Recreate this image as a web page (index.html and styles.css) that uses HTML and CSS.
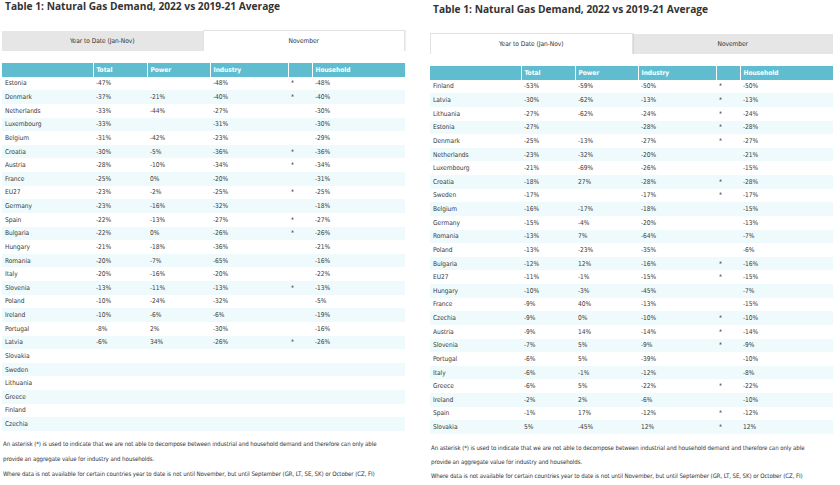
FILE: index.html
```html
<!DOCTYPE html>
<html>
<head>
<meta charset="utf-8">
<link rel="stylesheet" href="styles.css">
</head>
<body>
<div class="page">
  <section class="panel panel-left">
    <h1 class="title">Table 1: Natural Gas Demand, 2022 vs 2019-21 Average</h1>
    <div class="tabs">
      <div class="tab">Year to Date (Jan-Nov)</div>
      <div class="tab active">November</div>
    </div>
    <table class="data">
      <colgroup><col class="c1"><col class="c2"><col class="c3"><col class="c4"><col class="c5"><col class="c6"></colgroup>
      <thead><tr><th></th><th>Total</th><th>Power</th><th>Industry</th><th></th><th>Household</th></tr></thead>
      <tbody>
        <tr><td>Estonia</td><td>-47%</td><td></td><td>-48%</td><td>*</td><td>-48%</td></tr>
        <tr><td>Denmark</td><td>-37%</td><td>-21%</td><td>-40%</td><td>*</td><td>-40%</td></tr>
        <tr><td>Netherlands</td><td>-33%</td><td>-44%</td><td>-27%</td><td></td><td>-30%</td></tr>
        <tr><td>Luxembourg</td><td>-33%</td><td></td><td>-31%</td><td></td><td>-30%</td></tr>
        <tr><td>Belgium</td><td>-31%</td><td>-42%</td><td>-23%</td><td></td><td>-29%</td></tr>
        <tr><td>Croatia</td><td>-30%</td><td>-5%</td><td>-36%</td><td>*</td><td>-36%</td></tr>
        <tr><td>Austria</td><td>-28%</td><td>-10%</td><td>-34%</td><td>*</td><td>-34%</td></tr>
        <tr><td>France</td><td>-25%</td><td>0%</td><td>-20%</td><td></td><td>-31%</td></tr>
        <tr><td>EU27</td><td>-23%</td><td>-2%</td><td>-25%</td><td>*</td><td>-25%</td></tr>
        <tr><td>Germany</td><td>-23%</td><td>-16%</td><td>-32%</td><td></td><td>-18%</td></tr>
        <tr><td>Spain</td><td>-22%</td><td>-13%</td><td>-27%</td><td>*</td><td>-27%</td></tr>
        <tr><td>Bulgaria</td><td>-22%</td><td>0%</td><td>-26%</td><td>*</td><td>-26%</td></tr>
        <tr><td>Hungary</td><td>-21%</td><td>-18%</td><td>-36%</td><td></td><td>-21%</td></tr>
        <tr><td>Romania</td><td>-20%</td><td>-7%</td><td>-65%</td><td></td><td>-16%</td></tr>
        <tr><td>Italy</td><td>-20%</td><td>-16%</td><td>-20%</td><td></td><td>-22%</td></tr>
        <tr><td>Slovenia</td><td>-13%</td><td>-11%</td><td>-13%</td><td>*</td><td>-13%</td></tr>
        <tr><td>Poland</td><td>-10%</td><td>-24%</td><td>-32%</td><td></td><td>-5%</td></tr>
        <tr><td>Ireland</td><td>-10%</td><td>-6%</td><td>-6%</td><td></td><td>-19%</td></tr>
        <tr><td>Portugal</td><td>-8%</td><td>2%</td><td>-30%</td><td></td><td>-16%</td></tr>
        <tr><td>Latvia</td><td>-6%</td><td>34%</td><td>-26%</td><td>*</td><td>-26%</td></tr>
        <tr><td>Slovakia</td><td></td><td></td><td></td><td></td><td></td></tr>
        <tr><td>Sweden</td><td></td><td></td><td></td><td></td><td></td></tr>
        <tr><td>Lithuania</td><td></td><td></td><td></td><td></td><td></td></tr>
        <tr><td>Greece</td><td></td><td></td><td></td><td></td><td></td></tr>
        <tr><td>Finland</td><td></td><td></td><td></td><td></td><td></td></tr>
        <tr><td>Czechia</td><td></td><td></td><td></td><td></td><td></td></tr>
      </tbody>
    </table>
    <div class="notes">
      <p>An asterisk (*) is used to indicate that we are not able to decompose between industrial and household demand and therefore can only able provide an aggregate value for industry and households.</p>
      <p>Where data is not available for certain countries year to date is not until November, but until September (GR, LT, SE, SK) or October (CZ, FI)</p>
    </div>
  </section>

  <section class="panel panel-right">
    <h1 class="title">Table 1: Natural Gas Demand, 2022 vs 2019-21 Average</h1>
    <div class="tabs">
      <div class="tab active">Year to Date (Jan-Nov)</div>
      <div class="tab">November</div>
    </div>
    <table class="data">
      <colgroup><col class="c1"><col class="c2"><col class="c3"><col class="c4"><col class="c5"><col class="c6"></colgroup>
      <thead><tr><th></th><th>Total</th><th>Power</th><th>Industry</th><th></th><th>Household</th></tr></thead>
      <tbody>
        <tr><td>Finland</td><td>-53%</td><td>-59%</td><td>-50%</td><td>*</td><td>-50%</td></tr>
        <tr><td>Latvia</td><td>-30%</td><td>-62%</td><td>-13%</td><td>*</td><td>-13%</td></tr>
        <tr><td>Lithuania</td><td>-27%</td><td>-62%</td><td>-24%</td><td>*</td><td>-24%</td></tr>
        <tr><td>Estonia</td><td>-27%</td><td></td><td>-28%</td><td>*</td><td>-28%</td></tr>
        <tr><td>Denmark</td><td>-25%</td><td>-13%</td><td>-27%</td><td>*</td><td>-27%</td></tr>
        <tr><td>Netherlands</td><td>-23%</td><td>-32%</td><td>-20%</td><td></td><td>-21%</td></tr>
        <tr><td>Luxembourg</td><td>-21%</td><td>-69%</td><td>-26%</td><td></td><td>-15%</td></tr>
        <tr><td>Croatia</td><td>-18%</td><td>27%</td><td>-28%</td><td>*</td><td>-28%</td></tr>
        <tr><td>Sweden</td><td>-17%</td><td></td><td>-17%</td><td>*</td><td>-17%</td></tr>
        <tr><td>Belgium</td><td>-16%</td><td>-17%</td><td>-18%</td><td></td><td>-15%</td></tr>
        <tr><td>Germany</td><td>-15%</td><td>-4%</td><td>-20%</td><td></td><td>-13%</td></tr>
        <tr><td>Romania</td><td>-13%</td><td>7%</td><td>-64%</td><td></td><td>-7%</td></tr>
        <tr><td>Poland</td><td>-13%</td><td>-23%</td><td>-35%</td><td></td><td>-6%</td></tr>
        <tr><td>Bulgaria</td><td>-12%</td><td>12%</td><td>-16%</td><td>*</td><td>-16%</td></tr>
        <tr><td>EU27</td><td>-11%</td><td>-1%</td><td>-15%</td><td>*</td><td>-15%</td></tr>
        <tr><td>Hungary</td><td>-10%</td><td>-3%</td><td>-45%</td><td></td><td>-7%</td></tr>
        <tr><td>France</td><td>-9%</td><td>40%</td><td>-13%</td><td></td><td>-15%</td></tr>
        <tr><td>Czechia</td><td>-9%</td><td>0%</td><td>-10%</td><td>*</td><td>-10%</td></tr>
        <tr><td>Austria</td><td>-9%</td><td>14%</td><td>-14%</td><td>*</td><td>-14%</td></tr>
        <tr><td>Slovenia</td><td>-7%</td><td>5%</td><td>-9%</td><td>*</td><td>-9%</td></tr>
        <tr><td>Portugal</td><td>-6%</td><td>5%</td><td>-39%</td><td></td><td>-10%</td></tr>
        <tr><td>Italy</td><td>-6%</td><td>-1%</td><td>-12%</td><td></td><td>-8%</td></tr>
        <tr><td>Greece</td><td>-6%</td><td>5%</td><td>-22%</td><td>*</td><td>-22%</td></tr>
        <tr><td>Ireland</td><td>-2%</td><td>2%</td><td>-6%</td><td></td><td>-10%</td></tr>
        <tr><td>Spain</td><td>-1%</td><td>17%</td><td>-12%</td><td>*</td><td>-12%</td></tr>
        <tr><td>Slovakia</td><td>5%</td><td>-45%</td><td>12%</td><td>*</td><td>12%</td></tr>
      </tbody>
    </table>
    <div class="notes">
      <p>An asterisk (*) is used to indicate that we are not able to decompose between industrial and household demand and therefore can only able provide an aggregate value for industry and households.</p>
      <p>Where data is not available for certain countries year to date is not until November, but until September (GR, LT, SE, SK) or October (CZ, FI)</p>
    </div>
  </section>
</div>
</body>
</html>
```

FILE: styles.css
```css
html, body {
  margin: 0;
  padding: 0;
  background: #ffffff;
}

.page {
  display: flex;
  align-items: flex-start;
  width: 840px;
  height: 485px;
  overflow: hidden;
  font-family: "Liberation Sans Narrow", "DejaVu Sans Condensed", "Roboto", sans-serif;
  color: #3a3a3a;
}

.panel {
  width: 403px;
  flex: none;
}

.panel-left {
  margin-left: 2px;
}

.panel-right {
  margin-left: 25px;
  padding-top: 3px;
}

.title {
  margin: 0 0 0 3px;
  font-family: "Open Sans", "DejaVu Sans", sans-serif;
  font-weight: 700;
  font-size: 10.2px;
  line-height: 13px;
  color: #333333;
  letter-spacing: 0;
}

.tabs {
  display: flex;
  height: 20px;
  margin-top: 18px;
  background: #e6e6e6;
}

.tab {
  flex: 1;
  display: flex;
  align-items: center;
  justify-content: center;
  font-size: 6.6px;
  letter-spacing: -0.05px;
  color: #333333;
}

.tab.active {
  background: #ffffff;
  border: 1px solid #e2e2e2;
  border-bottom: none;
  box-shadow: 1px 0 1px rgba(0, 0, 0, 0.06);
  margin-top: -1px;
}

.data {
  margin-top: 12px;
  width: 403px;
  border-collapse: collapse;
  table-layout: fixed;
  font-size: 6.6px;
  letter-spacing: -0.05px;
  color: #3a3a3a;
}

.c1 { width: 91px; }
.c2 { width: 54px; }
.c3 { width: 63px; }
.c4 { width: 78px; }
.c5 { width: 24px; }
.c6 { width: 93px; }

.data th,
.data td {
  height: 13.63px;
  padding: 0 0 0 3px;
  text-align: left;
  vertical-align: middle;
  white-space: nowrap;
  box-sizing: border-box;
}

.data th {
  background: #5fbdcf;
  color: #ffffff;
  font-weight: 700;
  border-left: 1px solid #ffffff;
}

.data th:first-child {
  border-left: none;
}

.data tbody tr:nth-child(even) td {
  background: #effafc;
}

.notes {
  margin-top: 5px;
  width: 386px;
  font-size: 6.1px;
  letter-spacing: -0.09px;
  line-height: 15px;
  color: #333333;
}

.notes p {
  margin: 0 0 0 1px;
}

.panel-right .notes {
  margin-top: 7px;
  width: 388px;
  line-height: 14px;
}
```
